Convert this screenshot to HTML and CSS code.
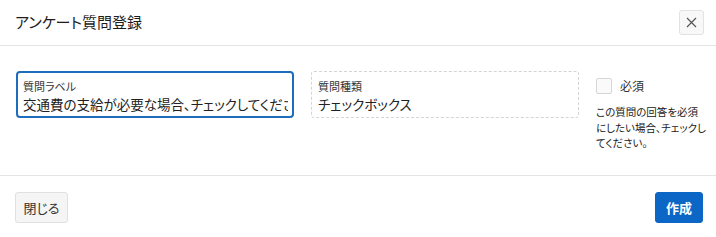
FILE: index.html
```html
<!DOCTYPE html>
<html lang="ja">
<head>
<meta charset="utf-8">
<link rel="stylesheet" href="styles.css">
</head>
<body>
<div class="dialog">
  <header class="dlg-head">
    <h1 class="dlg-title">アンケート質問登録</h1>
    <button class="close-btn" aria-label="閉じる">
      <svg width="11" height="11" viewBox="0 0 11 11"><path d="M1 1L10 10M10 1L1 10" stroke="#555" stroke-width="1.2" fill="none"/></svg>
    </button>
  </header>
  <main class="dlg-body">
    <div class="field field-active">
      <div class="field-label">質問ラベル</div>
      <div class="field-value">交通費の支給が必要な場合、チェックしてください。</div>
    </div>
    <div class="field field-readonly">
      <div class="field-label">質問種類</div>
      <div class="field-value">チェックボックス</div>
    </div>
    <div class="req">
      <label class="req-row"><span class="checkbox"></span><span class="req-label">必須</span></label>
      <p class="req-help">この質問の回答を必須にしたい場合、チェックしてください。</p>
    </div>
  </main>
  <footer class="dlg-foot">
    <button class="btn btn-sub">閉じる</button>
    <button class="btn btn-main">作成</button>
  </footer>
</div>
</body>
</html>
```

FILE: styles.css
```css
html, body {
  margin: 0;
  padding: 0;
  background: #fff;
}
body {
  font-family: "Noto Sans CJK JP", "Noto Sans", sans-serif;
  font-feature-settings: "palt";
  color: #222;
}
.dialog {
  width: 716px;
  height: 237px;
  display: flex;
  flex-direction: column;
}
.dlg-head {
  height: 46px;
  box-sizing: border-box;
  display: flex;
  align-items: center;
  justify-content: space-between;
  padding: 0 12px 0 15px;
  border-bottom: 1px solid #e4e4e4;
}
.dlg-title {
  margin: 0 0 2px;
  font-size: 15px;
  font-weight: normal;
  line-height: 22px;
  color: #1c1c1c;
}
.close-btn {
  width: 25px;
  height: 25px;
  padding: 0;
  display: flex;
  align-items: center;
  justify-content: center;
  background: #f8f8f8;
  border: 1px solid #e2e2e2;
  border-radius: 3px;
}
.dlg-body {
  height: 130px;
  box-sizing: border-box;
  padding: 25px 8px 0 16px;
  display: flex;
  align-items: flex-start;
  gap: 17px;
  border-bottom: 1px solid #e4e4e4;
}
.field {
  height: 47px;
  box-sizing: border-box;
  overflow: hidden;
}
.field-active {
  width: 278px;
  border: 2px solid #1e6cbc;
  border-radius: 4px;
  padding: 5px 4px 0 5px;
}
.field-readonly {
  width: 268px;
  border: 1px dashed #d4d4d4;
  border-radius: 3px;
  padding: 6px 6px 0 6px;
}
.field-label {
  font-size: 11px;
  line-height: 16px;
  color: #333;
}
.field-value {
  font-size: 13.5px;
  line-height: 20px;
  color: #222;
  white-space: nowrap;
  overflow: hidden;
}
.req {
  width: 112px;
  padding-top: 7px;
}
.req-row {
  display: flex;
  align-items: center;
  gap: 8px;
}
.checkbox {
  width: 14px;
  height: 14px;
  border: 1px solid #d6d6d6;
  border-radius: 2px;
  background: #fafafa;
}
.req-label {
  font-size: 12px;
  line-height: 16px;
  color: #333;
}
.req-help {
  margin: 10px 0 0;
  font-size: 10.5px;
  line-height: 15.5px;
  color: #222;
}
.dlg-foot {
  flex: 1;
  display: flex;
  justify-content: space-between;
  align-items: flex-start;
  padding: 16px 13px 0 15px;
}
.btn {
  height: 31px;
  box-sizing: border-box;
  font-family: inherit;
  font-feature-settings: "palt";
  font-size: 13px;
  border-radius: 3px;
  padding: 0;
}
.btn-sub {
  width: 53px;
  background: #f5f5f5;
  border: 1px solid #e0e0e0;
  color: #333;
}
.btn-main {
  width: 48px;
  background: #0b66c6;
  border: 1px solid #0b66c6;
  color: #fff;
  font-weight: bold;
}
```
